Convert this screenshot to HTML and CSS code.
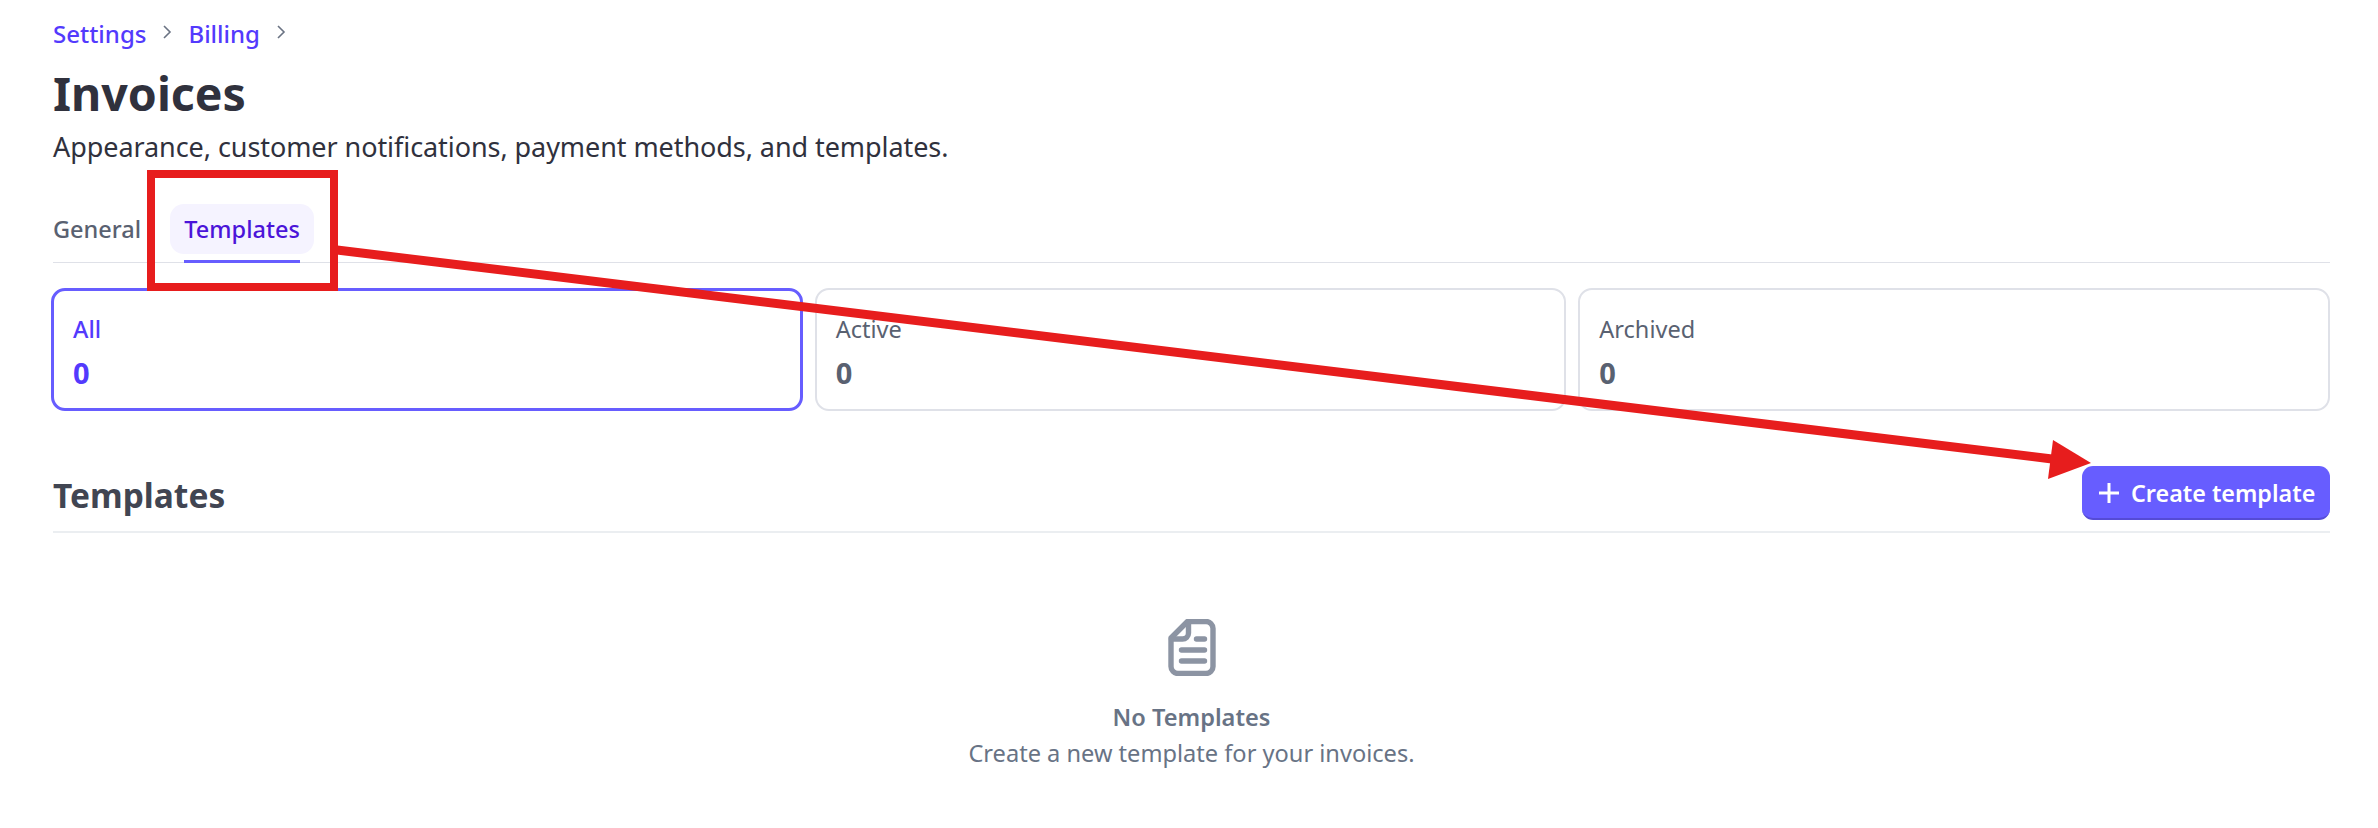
FILE: index.html
```html
<!DOCTYPE html>
<html lang="en">
<head>
    <meta charset="UTF-8">
    <title>Invoices</title>
    <link rel="stylesheet" href="styles.css">
</head>
<body>
    <div class="page">
        <nav class="crumbs">
            <a class="crumb">Settings</a>
            <svg class="chev" viewBox="0 0 10 16"><path d="M2 2l6 6-6 6"/></svg>
            <a class="crumb">Billing</a>
            <svg class="chev" viewBox="0 0 10 16"><path d="M2 2l6 6-6 6"/></svg>
        </nav>

        <h1 class="title">Invoices</h1>
        <p class="subtitle">Appearance, customer notifications, payment methods, and templates.</p>

        <div class="tabs">
            <div class="tab">General</div>
            <div class="tab active"><span>Templates</span></div>
        </div>

        <div class="filters">
            <div class="filter selected">
                <div class="filter-label">All</div>
                <div class="filter-count">0</div>
            </div>
            <div class="filter">
                <div class="filter-label">Active</div>
                <div class="filter-count">0</div>
            </div>
            <div class="filter">
                <div class="filter-label">Archived</div>
                <div class="filter-count">0</div>
            </div>
        </div>

        <div class="section-head">
            <h2 class="section-title">Templates</h2>
            <button class="btn-create">
                <svg class="plus" viewBox="0 0 22 22"><path d="M11 1v20M1 11h20"/></svg>
                <span>Create template</span>
            </button>
        </div>

        <div class="empty">
            <svg class="empty-icon" viewBox="0 0 47 57">
                <path d="M19 2.5H37.5a7 7 0 0 1 7 7v38a7 7 0 0 1-7 7H9.5a7 7 0 0 1-7-7V19z"/>
                <path d="M20 3v11a6 6 0 0 1-6 6H3"/>
                <path d="M28 20h8M13 31h23M13 42h23"/>
            </svg>
            <div class="empty-title">No Templates</div>
            <div class="empty-text">Create a new template for your invoices.</div>
        </div>
    </div>

    <!-- red annotation drawn on top of the screenshot -->
    <svg class="markup" viewBox="0 0 2378 828">
        <rect x="151" y="174" width="183" height="113" fill="none" stroke="#e71d1d" stroke-width="8"/>
        <path d="M337 250L2052 459" stroke="#e71d1d" stroke-width="9" fill="none"/>
        <path d="M2053 440L2091 463L2048 479z" fill="#e71d1d"/>
    </svg>
</body>
</html>
```

FILE: styles.css
```css
*{
    margin: 0;
    padding: 0;
    box-sizing: border-box;
}

body{
    font-family: "Noto Sans", "Open Sans", sans-serif;
    background-color: #fff;
    color: #30313d;
    overflow: hidden;
}

.page{
    height: 828px;
    padding: 15px 48px 0 53px;
}

.crumbs{
    display: flex;
    align-items: center;
    gap: 16px;
    height: 36px;
}

.crumb{
    font-size: 24px;
    font-weight: 500;
    color: #533afd;
}

.chev{
    width: 10px;
    height: 16px;
    margin-top: -3px;
    fill: none;
    stroke: #6a7383;
    stroke-width: 1.6;
}

.title{
    font-size: 46.5px;
    line-height: 62px;
    font-weight: 700;
    margin-top: 11px;
}

.subtitle{
    font-size: 27px;
    letter-spacing: -0.07px;
    line-height: 38px;
    margin-top: 4px;
    color: #30313d;
}

.tabs{
    display: flex;
    align-items: stretch;
    height: 62px;
    margin-top: 35px;
    border-bottom: 1px solid #dfe1e8;
}

.tab{
    font-size: 23.5px;
    font-weight: 500;
    color: #596171;
    line-height: 50px;
    margin-top: 3px;
}

.tab.active{
    position: relative;
    margin-left: 29px;
    width: 144px;
    height: 50px;
    border-radius: 14px;
    background-color: #f5f3ff;
    color: #4b14d9;
    text-align: center;
}

.tab.active::after{
    content: "";
    position: absolute;
    left: 14px;
    right: 14px;
    top: 56px;
    height: 3px;
    background-color: #675dff;
}

.filters{
    display: grid;
    grid-template-columns: repeat(3, 1fr);
    gap: 12px;
    margin: 25px 0 0 -2px;
}

.filter{
    height: 123px;
    padding: 22px 19px;
    border: 2px solid #dfe1e8;
    border-radius: 14px;
    color: #596171;
}

.filter.selected{
    padding: 21px 19px;
    border: 3px solid #675dff;
    color: #533afd;
}

.filter.selected .filter-label{
    font-weight: 500;
}

.filter-label{
    font-size: 23.5px;
    line-height: 34px;
}

.filter-count{
    font-size: 29px;
    font-weight: 700;
    line-height: 44px;
    margin-top: 5px;
}

.section-head{
    display: flex;
    align-items: flex-end;
    justify-content: space-between;
    height: 66px;
    margin-top: 56px;
    padding-bottom: 11px;
    border-bottom: 2px solid #ebeef1;
}

.section-title{
    font-size: 33.5px;
    line-height: 44px;
    font-weight: 700;
    color: #414552;
    margin-bottom: 3px;
}

.btn-create{
    display: flex;
    align-items: center;
    gap: 11px;
    width: 248px;
    height: 54px;
    padding: 2px 0 0 16px;
    border: 0;
    border-bottom: 2px solid #554bd6;
    border-radius: 11px;
    background-color: #675dff;
    color: #fff;
    font-family: inherit;
    font-size: 23.3px;
    font-weight: 600;
}

.plus{
    width: 22px;
    height: 22px;
    fill: none;
    stroke: #fff;
    stroke-width: 3;
}

.empty{
    display: flex;
    flex-direction: column;
    align-items: center;
    padding-top: 86px;
}

.empty-icon{
    width: 48px;
    height: 57px;
    fill: none;
    stroke: #8c94a3;
    stroke-width: 5.4;
    stroke-linecap: round;
    stroke-linejoin: round;
}

.empty-title{
    font-size: 23.6px;
    font-weight: 600;
    line-height: 34px;
    margin-top: 24px;
    color: #687385;
}

.empty-text{
    font-size: 23.6px;
    line-height: 36px;
    margin-top: 1px;
    color: #687385;
}

.markup{
    position: absolute;
    left: 0;
    top: 0;
    width: 2378px;
    height: 828px;
    pointer-events: none;
}
```
